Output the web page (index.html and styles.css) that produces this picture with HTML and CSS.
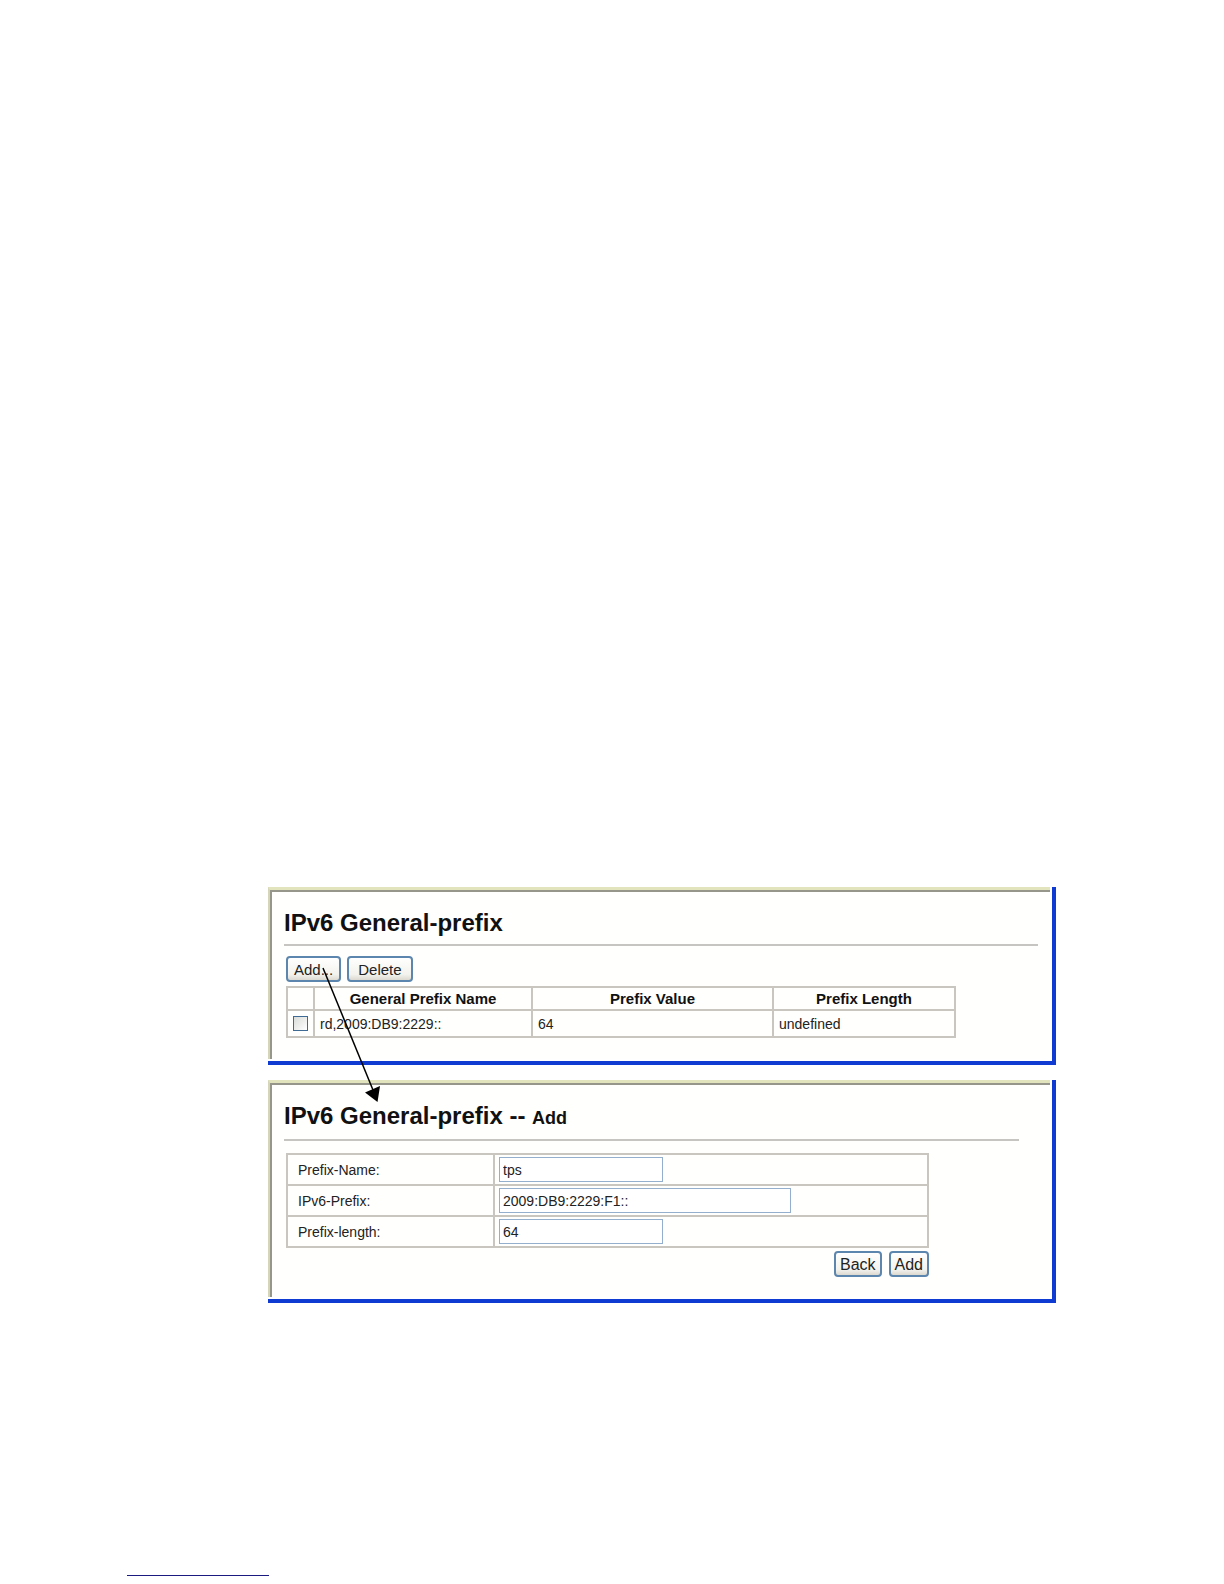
FILE: index.html
```
<!DOCTYPE html>
<html lang="en">
<head>
    <meta charset="UTF-8">
    <meta name="viewport" content="width=device-width, initial-scale=1.0">
    <title>IPv6 General-prefix</title>
    <link rel="stylesheet" href="styles.css">
</head>
<body>
    <main class="screens">
        <section class="panel">
            <div class="frame">
                <h1>IPv6 General-prefix</h1>
                <hr>
                <div class="toolbar">
                    <button type="button">Add...</button>
                    <button type="button" class="delete">Delete</button>
                </div>
                <table class="prefix-list">
                    <thead>
                        <tr>
                            <th class="col-check"></th>
                            <th class="col-name">General Prefix Name</th>
                            <th class="col-value">Prefix Value</th>
                            <th>Prefix Length</th>
                        </tr>
                    </thead>
                    <tbody>
                        <tr>
                            <td class="col-check"><input type="checkbox" aria-label="Select prefix rd"></td>
                            <td>rd,2009:DB9:2229::</td>
                            <td>64</td>
                            <td>undefined</td>
                        </tr>
                    </tbody>
                </table>
            </div>
        </section>

        <section class="panel">
            <form class="frame add-form">
                <h1>IPv6 General-prefix -- <small>Add</small></h1>
                <hr>
                <table class="fields">
                    <tr>
                        <th><label for="prefixName">Prefix-Name:</label></th>
                        <td><input type="text" id="prefixName" value="tps"></td>
                    </tr>
                    <tr>
                        <th><label for="prefix">IPv6-Prefix:</label></th>
                        <td><input type="text" id="prefix" class="wide" value="2009:DB9:2229:F1::"></td>
                    </tr>
                    <tr>
                        <th><label for="prefixLength">Prefix-length:</label></th>
                        <td><input type="text" id="prefixLength" value="64"></td>
                    </tr>
                </table>
                <div class="actions">
                    <button type="button">Back</button>
                    <button type="button">Add</button>
                </div>
            </form>
        </section>

        <!-- arrow from the Add... button to the add form -->
        <svg class="arrow" width="120" height="220" viewBox="0 0 120 220" aria-hidden="true">
            <path d="M55 81 L105 203" stroke="#000" stroke-width="1.5" fill="none"/>
            <path d="M97 205.500 L112 199 L109.500 215 Z" fill="#000"/>
        </svg>
    </main>
    <footer><div class="footer-line"></div></footer>
</body>
</html>
```

FILE: styles.css
```
* {
    box-sizing: border-box;
}
body {
    font-family: "Liberation Sans", Arial, sans-serif;
    font-size: 14px;
    color: #222;
    background-color: white;
    margin: 0;
    min-height: 100vh;
    display: flex;
    flex-direction: column;
}
.screens {
    position: relative;
    display: flex;
    flex-direction: column;
    gap: 15px;
    margin: auto 168px 0 268px;
}
.panel {
    border-right: 4px solid #0f3bd2;
    border-bottom: 4px solid #0f3bd2;
    padding: 0 2px 2px 0;
}
.frame {
    border-top: 3px solid #e1e4bd;
    border-left: 2px solid #d5d6b8;
    box-shadow: inset 2px 2px #96978a;
    padding: 19px 12px 21px 14px;
    background-color: #fffffd;
}
h1 {
    font-size: 24px;
    line-height: 28px;
    color: #111;
    margin: 0;
}
h1 small {
    font-size: 18px;
}
hr {
    height: 2px;
    border: none;
    background-color: #c6c5c1;
    margin: 7px 0 10px;
}
button {
    font-family: inherit;
    font-size: 15px;
    line-height: 17px;
    color: #222;
    height: 26px;
    padding: 0 6px;
    border: 2px solid #5c86ad;
    border-radius: 4px;
    background: linear-gradient(#fff, #f3f2ed 75%, #dcd9d0);
}
button.delete {
    padding: 0 9px;
}
.toolbar {
    display: flex;
    gap: 6px;
    margin: 0 0 4px 2px;
}
table {
    border-collapse: collapse;
    table-layout: fixed;
    margin-left: 2px;
}
th,
td {
    border: 2px solid #c9c6bf;
    text-align: left;
}
.prefix-list {
    width: calc(100% - 84px);
}
.prefix-list th {
    height: 23px;
    padding: 0;
    font-size: 15px;
    line-height: 18px;
    color: #111;
    text-align: center;
}
.prefix-list td {
    height: 27px;
    padding: 0 5px;
}
.prefix-list .col-check {
    width: 27px;
    padding: 0;
    text-align: center;
}
.col-name {
    width: 218px;
}
.col-value {
    width: 241px;
}
input[type="checkbox"] {
    appearance: none;
    display: block;
    width: 15px;
    height: 15px;
    margin: 0 auto;
    border: 1px solid #3f6a93;
    background: linear-gradient(135deg, #d9dcd8, #fff);
}
.add-form {
    padding-bottom: 20px;
}
.add-form hr {
    margin: 7px 19px 12px 0;
}
.fields {
    width: calc(100% - 111px);
}
.fields th {
    width: 207px;
    padding: 0 10px;
    font-weight: normal;
}
.fields td {
    height: 31px;
    padding: 0 4px;
}
.fields input {
    display: block;
    width: 164px;
    height: 25px;
    padding: 0 3px;
    border: 1px solid #93afcd;
    background-color: white;
    font-family: inherit;
    font-size: 14px;
    color: #222;
}
.fields input.wide {
    width: 292px;
}
.actions {
    display: flex;
    justify-content: flex-end;
    gap: 7px;
    width: calc(100% - 111px);
    margin: 3px 0 0 2px;
}
.actions button {
    font-size: 16px;
    padding: 0 4px;
}
.arrow {
    position: absolute;
    top: 0;
    left: 0;
    pointer-events: none;
}
footer {
    padding: 272px 0 8px 127px;
}
.footer-line {
    width: 142px;
    height: 1px;
    background-color: #1a1a80;
}
```
